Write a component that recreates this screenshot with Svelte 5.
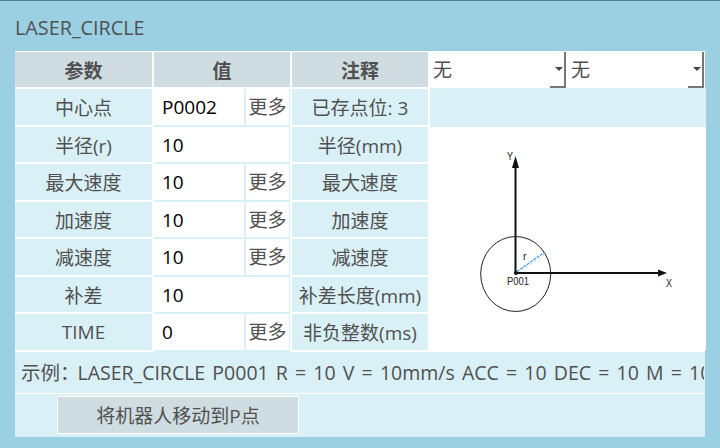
<script>
  const rows = [
    { name: '中心点', value: 'P0002', more: true, note: '已存点位: 3' },
    { name: '半径(r)', value: '10', more: false, note: '半径(mm)' },
    { name: '最大速度', value: '10', more: true, note: '最大速度' },
    { name: '加速度', value: '10', more: true, note: '加速度' },
    { name: '减速度', value: '10', more: true, note: '减速度' },
    { name: '补差', value: '10', more: false, note: '补差长度(mm)' },
    { name: 'TIME', value: '0', more: true, note: '非负整数(ms)' }
  ];
</script>

<div class="page">
  <div class="title">LASER_CIRCLE</div>
  <div class="panel">
    <div class="table">
      <div class="cell head">参数</div>
      <div class="cell head">值</div>
      <div class="cell head">注释</div>
      <div class="selects">
        <div class="select">无<span class="drop"><span class="arrow"></span></span></div>
        <div class="select">无<span class="drop"><span class="arrow"></span></span></div>
      </div>

      {#each rows as row, i}
        <div class="cell">{row.name}</div>
        <div class="value">
          <div class="input">{row.value}</div>
          {#if row.more}
            <div class="more">更多</div>
          {/if}
        </div>
        <div class="cell">{row.note}</div>
        {#if i === 0}
          <div class="blank"></div>
        {:else if i === 1}
          <div class="diagram">
            <svg width="275" height="223" viewBox="0 0 275 223">
              <ellipse cx="85.7" cy="147" rx="35" ry="37.5" fill="none" stroke="#222" stroke-width="1" />
              <path d="M85.5 147 L85.5 36" stroke="#111" stroke-width="2" />
              <path d="M85.5 29 L82 41 L89 41 Z" fill="#111" />
              <path d="M86 146 L230 146" stroke="#111" stroke-width="2" />
              <path d="M237 146 L228 142.5 L228 149.5 Z" fill="#111" />
              <path d="M87 144.5 L115 125" stroke="#3f97e6" stroke-width="1.2" stroke-dasharray="3 1" />
              <path d="M92 143 L114 128" stroke="#a9d0f0" stroke-width="1" stroke-dasharray="2 3" />
              <circle cx="86" cy="146" r="2" fill="#111" />
              <text x="77" y="33" class="label" textLength="6" lengthAdjust="spacingAndGlyphs">Y</text>
              <text x="236" y="160" class="label" textLength="6" lengthAdjust="spacingAndGlyphs">X</text>
              <text x="93" y="133" class="label">r</text>
              <text x="77" y="158" class="label" textLength="22" lengthAdjust="spacingAndGlyphs">P001</text>
            </svg>
          </div>
        {/if}
      {/each}
    </div>
    <div class="example"><span>示例：</span><span class="code">LASER_CIRCLE P0001 R = 10 V = 10mm/s ACC = 10 DEC = 10 M = 10</span></div>
    <div class="actions">
      <div class="btn">将机器人移动到P点</div>
    </div>
  </div>
</div>

<style>
  :global(body) {
    margin: 0;
  }

  .page {
    width: 720px;
    height: 448px;
    box-sizing: border-box;
    background: #9bcfe2;
    border-top: 1px solid #4f7f94;
    padding: 0 15px;
    overflow: hidden;
    font-family: "Open Sans", "Noto Sans CJK SC", sans-serif;
    font-size: 19px;
    color: #505050;
  }

  .title {
    height: 50px;
    line-height: 54px;
    font-size: 19.8px;
  }

  .panel {
    width: 690px;
    background: #d9f0f7;
  }

  .table {
    display: grid;
    grid-template-columns: 137px 136px 136px 275px;
    column-gap: 2px;
    grid-template-rows: 37px repeat(7, 37.5px);
    background: #fff;
    padding: 1px 1px 0 0;
  }

  .cell {
    display: flex;
    align-items: center;
    justify-content: center;
    box-sizing: border-box;
    padding-top: 1px;
    background: #d9f0f7;
    border-bottom: 2px solid #fff;
  }

  .head {
    background: #cfdce1;
    font-weight: 700;
  }

  .selects {
    display: flex;
    gap: 2px;
    height: 36px;
  }

  .select {
    position: relative;
    width: 136px;
    box-sizing: border-box;
    background: #fff;
    padding-left: 3px;
    line-height: 37px;
  }

  .drop {
    position: absolute;
    right: 0;
    top: 0;
    bottom: 0;
    width: 16px;
    box-sizing: border-box;
    border-right: 2px solid #777;
    border-bottom: 2px solid #777;
  }

  .arrow {
    position: absolute;
    right: 1px;
    top: 15px;
    border-left: 4px solid transparent;
    border-right: 4px solid transparent;
    border-top: 4px solid #444;
  }

  .value {
    box-sizing: border-box;
    background: #d9f0f7;
    display: flex;
    gap: 2px;
    padding: 0 1px 2px 0;
  }

  .input {
    flex: 1;
    background: #fff;
    color: #000;
    padding-left: 8px;
    line-height: 37px;
  }

  .more {
    flex: 0 0 43px;
    background: #fff;
    text-align: center;
    line-height: 37px;
    white-space: nowrap;
    overflow: hidden;
  }

  .blank {
    margin: -1px -1px 0 0;
    background: #d9f0f7;
  }

  .diagram {
    grid-row: span 6;
    background: #fff;
    margin-right: -1px;
    height: 223px;
  }

  .label {
    font-family: "Liberation Sans", sans-serif;
    font-size: 10.5px;
    fill: #222;
  }

  .example {
    box-sizing: border-box;
    width: 689px;
    height: 42px;
    line-height: 41px;
    padding-left: 6px;
    overflow: hidden;
    white-space: nowrap;
    border-bottom: 1px solid #fff;
    font-size: 19.5px;
  }

  .code {
    margin-left: -2px;
    word-spacing: 2.1px;
  }

  .actions {
    height: 43px;
    box-sizing: border-box;
    padding: 2px 0 0 42px;
  }

  .btn {
    width: 242px;
    height: 38px;
    box-sizing: border-box;
    background: #cfdce1;
    border: 1px solid #fff;
    display: flex;
    align-items: center;
    justify-content: center;
  }
</style>
